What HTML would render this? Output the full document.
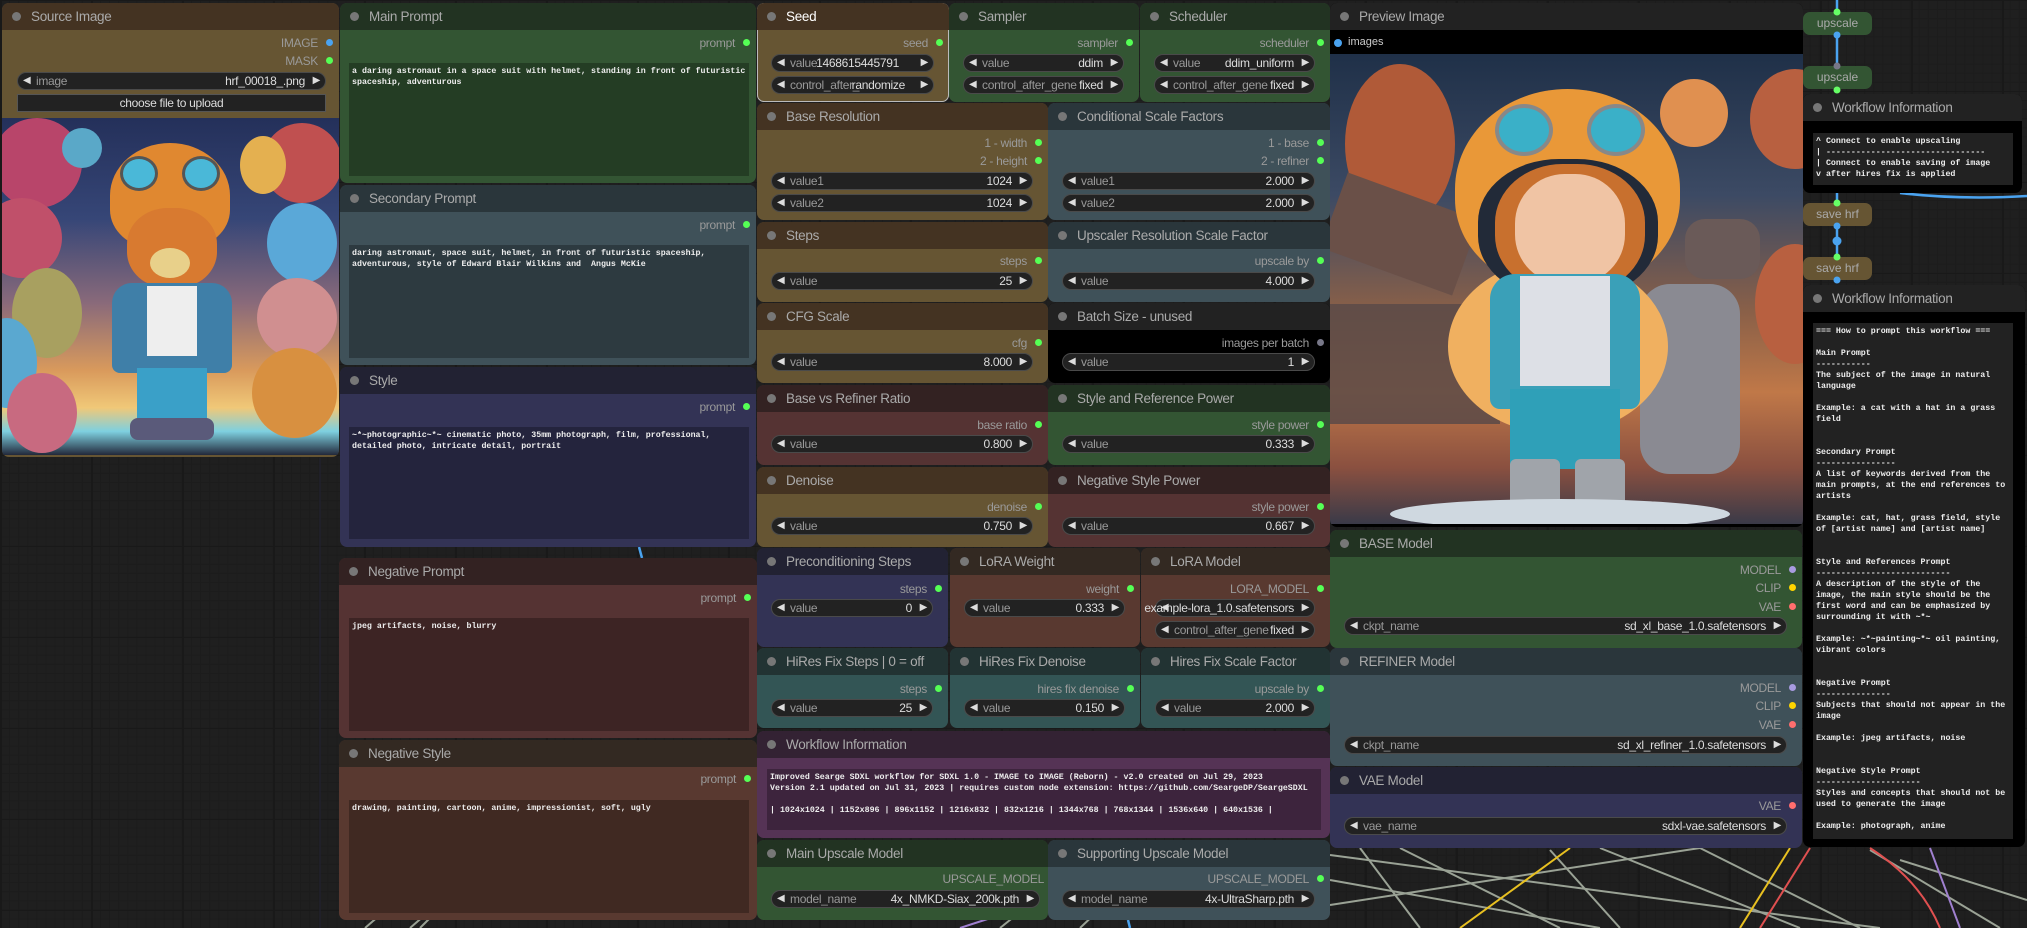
<!DOCTYPE html>
<html><head><meta charset="utf-8">
<style>
*{box-sizing:border-box;margin:0;padding:0}
body{width:2027px;height:928px;overflow:hidden;position:relative;background-color:#1f1f1f;
background-image:linear-gradient(#191919 1px,transparent 1px),linear-gradient(90deg,#191919 2px,transparent 2px),linear-gradient(#1c1c1c 1px,transparent 1px),linear-gradient(90deg,#1c1c1c 1px,transparent 1px);
background-size:91px 91px,91px 91px,9.1px 9.1px,9.1px 9.1px;font-family:"Liberation Sans",Arial,sans-serif}
.n{position:absolute;border-radius:7px;overflow:hidden}
.t{position:absolute;left:0;right:0;top:0;height:27px;line-height:27px;padding-left:29px;font-size:13.5px;color:#aaa;letter-spacing:-.3px;white-space:nowrap}
.t::before{content:"";position:absolute;left:10px;top:9px;width:9px;height:9px;border-radius:50%;background:#777}
.o{position:absolute;right:21px;font-size:12px;color:#9a9a9a;transform:translateY(-50%);letter-spacing:-.3px;white-space:nowrap;line-height:14px}
.o::after{content:"";position:absolute;right:-15px;top:3px;width:7px;height:7px;border-radius:50%;background:var(--c,#5f5)}
.w{position:absolute;left:14px;right:15px;height:18px;border-radius:9px;background:#222;border:1px solid #4a4a4a;font-size:12px;color:#999;line-height:16px;letter-spacing:-.3px;white-space:nowrap}
.w::before{content:"◀";position:absolute;left:5px;top:0;color:#ddd;font-size:10px}
.w::after{content:"▶";position:absolute;right:5px;top:0;color:#ddd;font-size:10px}
.w .l{position:absolute;left:18px}
.w .v{position:absolute;right:20px;color:#ddd}
.ta{position:absolute;background:rgba(0,0,0,.28);font-family:"Liberation Mono",monospace;font-size:8.3px;color:#eee;line-height:11px;padding:3px 3px;white-space:pre-wrap;font-weight:bold;overflow:hidden}
.Y{background:#653}.Y>.t{background:#432}
.G{background:#353}.G>.t{background:#232}
.PB{background:#3f5159}.PB>.t{background:#2a363b}
.B{background:#335}.B>.t{background:#223}
.R{background:#533}.R>.t{background:#322}
.BR{background:#593930}.BR>.t{background:#332922}
.C{background:#355}.C>.t{background:#233}
.P{background:#535}.P>.t{background:#323}
.K{background:#000}.K>.t{background:#222}
.pill{position:absolute;border-radius:7px;font-size:12px;color:#aaa;text-align:center;line-height:23px;width:69px;height:23px}
.bl{position:absolute;border-radius:50%}
</style></head><body>

<svg width="2027" height="928" style="position:absolute;left:0;top:0" fill="none">
<g stroke="#9aa295" stroke-width="2">
<line x1="1000" y1="928" x2="1060" y2="880"/><line x1="1080" y1="928" x2="1120" y2="890"/>
<line x1="1330" y1="880" x2="1600" y2="928"/><line x1="1330" y1="905" x2="1700" y2="848"/>
<line x1="1360" y1="848" x2="1420" y2="928"/><line x1="1400" y1="848" x2="1560" y2="928"/>
<line x1="1550" y1="850" x2="1620" y2="928"/><line x1="1600" y1="848" x2="1800" y2="928"/>
<line x1="1700" y1="848" x2="1860" y2="928"/><line x1="1870" y1="850" x2="2000" y2="928"/>
<line x1="1330" y1="855" x2="1880" y2="928"/><line x1="1900" y1="860" x2="2027" y2="900"/>
<line x1="365" y1="928" x2="380" y2="915"/><line x1="410" y1="928" x2="425" y2="915"/><line x1="420" y1="928" x2="432" y2="916"/>
</g>
<line x1="1460" y1="928" x2="1570" y2="848" stroke="#e8c020" stroke-width="2"/>
<line x1="1740" y1="928" x2="1790" y2="848" stroke="#e8c020" stroke-width="2"/>
<line x1="1760" y1="928" x2="1810" y2="848" stroke="#e05050" stroke-width="2"/>
<path d="M1870 848 Q1920 880 1940 928" stroke="#e05050" stroke-width="2"/>
<line x1="1930" y1="848" x2="1960" y2="928" stroke="#a080d0" stroke-width="2"/>
<line x1="960" y1="928" x2="1000" y2="915" stroke="#a080d0" stroke-width="2"/>
<g stroke="#4aa3f0" stroke-width="2.5">
<line x1="1837" y1="0" x2="1837" y2="12"/><line x1="1837" y1="35" x2="1837" y2="66"/>
<line x1="1837" y1="193" x2="1837" y2="203"/><line x1="1837" y1="226" x2="1837" y2="257"/>
<path d="M1900 193 Q1960 200 2027 196"/>
<line x1="639" y1="547" x2="642" y2="558"/><line x1="1128" y1="920" x2="1130" y2="928"/>
</g>
<line x1="320" y1="458" x2="320" y2="928" stroke="#223" stroke-width="1"/>
</svg>

<!-- Source Image -->
<div class="n Y" style="left:2px;top:3px;width:337px;height:454px">
<div class="t">Source Image</div>
<div class="o" style="top:40px;--c:#4aa3f0">IMAGE</div>
<div class="o" style="top:58px">MASK</div>
<div class="w" style="top:69px;left:15px;right:13px"><span class="l">image</span><span class="v">hrf_00018_.png</span></div>
<div style="position:absolute;left:15px;right:13px;top:91px;height:18px;background:#222;border:1px solid #555;color:#ddd;font-size:12px;text-align:center;line-height:16px;letter-spacing:-.3px">choose file to upload</div>
<div style="position:absolute;left:0;right:0;top:115px;height:337px;overflow:hidden;background:linear-gradient(180deg,#24305a 0%,#364677 30%,#8a6a7a 55%,#d99a5c 75%,#f0c878 86%,#7ed0e0 93%,#22283a 100%)">
 <div class="bl" style="left:-10px;top:0px;width:90px;height:90px;background:#b8456a"></div>
 <div class="bl" style="left:-20px;top:80px;width:80px;height:80px;background:#c0506a"></div>
 <div class="bl" style="left:10px;top:150px;width:70px;height:90px;background:#a8a060"></div>
 <div class="bl" style="left:-25px;top:200px;width:60px;height:90px;background:#5aa8d0"></div>
 <div class="bl" style="left:5px;top:255px;width:70px;height:80px;background:#c86a80"></div>
 <div class="bl" style="left:260px;top:5px;width:80px;height:80px;background:#c05050"></div>
 <div class="bl" style="left:265px;top:85px;width:70px;height:80px;background:#5aa8d8"></div>
 <div class="bl" style="left:255px;top:160px;width:80px;height:80px;background:#d08f90"></div>
 <div class="bl" style="left:250px;top:230px;width:85px;height:90px;background:#d89040"></div>
 <div class="bl" style="left:60px;top:10px;width:40px;height:40px;background:#5aa8c8"></div>
 <div class="bl" style="left:238px;top:18px;width:46px;height:58px;background:#e4b050"></div>
 <div class="bl" style="left:108px;top:25px;width:120px;height:105px;border-radius:55% 55% 40% 40%;background:#e08830"></div>
 <div class="bl" style="left:118px;top:38px;width:38px;height:35px;background:#4ab8d8;border:3px solid #555"></div>
 <div class="bl" style="left:180px;top:38px;width:38px;height:35px;background:#4ab8d8;border:3px solid #555"></div>
 <div class="bl" style="left:125px;top:90px;width:90px;height:80px;border-radius:45%;background:#d87a30"></div>
 <div class="bl" style="left:148px;top:130px;width:40px;height:30px;background:#e8d08a"></div>
 <div style="position:absolute;left:110px;top:165px;width:120px;height:90px;border-radius:20px 20px 8px 8px;background:#3f7fa8"></div>
 <div style="position:absolute;left:145px;top:168px;width:50px;height:70px;background:#eee"></div>
 <div style="position:absolute;left:135px;top:250px;width:70px;height:55px;background:#3aa0c8"></div>
 <div style="position:absolute;left:128px;top:300px;width:84px;height:22px;border-radius:8px;background:#5a5a7a"></div>
</div>
</div>

<!-- column 2 -->
<div class="n G" style="left:340px;top:3px;width:416px;height:180px"><div class="t">Main Prompt</div><div class="o" style="top:40px">prompt</div>
<div class="ta" style="left:9px;top:60px;width:400px;height:113px">a daring astronaut in a space suit with helmet, standing in front of futuristic spaceship, adventurous</div></div>
<div class="n PB" style="left:340px;top:185px;width:416px;height:180px"><div class="t">Secondary Prompt</div><div class="o" style="top:40px">prompt</div>
<div class="ta" style="left:9px;top:60px;width:400px;height:113px">daring astronaut, space suit, helmet, in front of futuristic spaceship, adventurous, style of Edward Blair Wilkins and  Angus McKie</div></div>
<div class="n B" style="left:340px;top:367px;width:416px;height:180px"><div class="t">Style</div><div class="o" style="top:40px">prompt</div>
<div class="ta" style="left:9px;top:60px;width:400px;height:112px">~*~photographic~*~ cinematic photo, 35mm photograph, film, professional, detailed photo, intricate detail, portrait</div></div>
<div class="n R" style="left:339px;top:558px;width:418px;height:180px"><div class="t">Negative Prompt</div><div class="o" style="top:40px">prompt</div>
<div class="ta" style="left:10px;top:60px;width:400px;height:113px">jpeg artifacts, noise, blurry</div></div>
<div class="n BR" style="left:339px;top:740px;width:418px;height:180px"><div class="t">Negative Style</div><div class="o" style="top:39px">prompt</div>
<div class="ta" style="left:10px;top:60px;width:400px;height:113px">drawing, painting, cartoon, anime, impressionist, soft, ugly</div></div>

<!-- column 3 -->
<div class="n Y" style="left:757px;top:3px;width:192px;height:99px;box-shadow:inset 0 0 0 1px #bbb"><div class="t" style="color:#fff">Seed</div><div class="o" style="top:40px">seed</div>
<div class="w" style="top:51px"><span class="l">value</span><span class="v" style="right:34px">1468615445791</span></div>
<div class="w" style="top:73px"><span class="l">control_after_</span><span class="v" style="right:28px">randomize</span></div></div>
<div class="n G" style="left:949px;top:3px;width:190px;height:99px"><div class="t">Sampler</div><div class="o" style="top:40px">sampler</div>
<div class="w" style="top:51px"><span class="l">value</span><span class="v">ddim</span></div>
<div class="w" style="top:73px"><span class="l">control_after_gene</span><span class="v">fixed</span></div></div>
<div class="n G" style="left:1140px;top:3px;width:190px;height:99px"><div class="t">Scheduler</div><div class="o" style="top:40px">scheduler</div>
<div class="w" style="top:51px"><span class="l">value</span><span class="v">ddim_uniform</span></div>
<div class="w" style="top:73px"><span class="l">control_after_gene</span><span class="v">fixed</span></div></div>

<div class="n Y" style="left:757px;top:103px;width:291px;height:117px"><div class="t">Base Resolution</div>
<div class="o" style="top:40px">1 - width</div><div class="o" style="top:58px">2 - height</div>
<div class="w" style="top:69px"><span class="l">value1</span><span class="v">1024</span></div>
<div class="w" style="top:91px"><span class="l">value2</span><span class="v">1024</span></div></div>
<div class="n PB" style="left:1048px;top:103px;width:282px;height:117px"><div class="t">Conditional Scale Factors</div>
<div class="o" style="top:40px">1 - base</div><div class="o" style="top:58px">2 - refiner</div>
<div class="w" style="top:69px"><span class="l">value1</span><span class="v">2.000</span></div>
<div class="w" style="top:91px"><span class="l">value2</span><span class="v">2.000</span></div></div>

<div class="n Y" style="left:757px;top:222px;width:291px;height:80px"><div class="t">Steps</div><div class="o" style="top:39px">steps</div><div class="w" style="top:50px"><span class="l">value</span><span class="v">25</span></div></div>
<div class="n PB" style="left:1048px;top:222px;width:282px;height:80px"><div class="t">Upscaler Resolution Scale Factor</div><div class="o" style="top:39px">upscale by</div><div class="w" style="top:50px"><span class="l">value</span><span class="v">4.000</span></div></div>

<div class="n Y" style="left:757px;top:303px;width:291px;height:80px"><div class="t">CFG Scale</div><div class="o" style="top:40px">cfg</div><div class="w" style="top:50px"><span class="l">value</span><span class="v">8.000</span></div></div>
<div class="n K" style="left:1048px;top:303px;width:282px;height:80px"><div class="t">Batch Size - unused</div><div class="o" style="top:40px;--c:#778">images per batch</div><div class="w" style="top:50px"><span class="l">value</span><span class="v">1</span></div></div>

<div class="n R" style="left:757px;top:385px;width:291px;height:80px"><div class="t">Base vs Refiner Ratio</div><div class="o" style="top:40px">base ratio</div><div class="w" style="top:50px"><span class="l">value</span><span class="v">0.800</span></div></div>
<div class="n G" style="left:1048px;top:385px;width:282px;height:80px"><div class="t">Style and Reference Power</div><div class="o" style="top:40px">style power</div><div class="w" style="top:50px"><span class="l">value</span><span class="v">0.333</span></div></div>

<div class="n Y" style="left:757px;top:467px;width:291px;height:80px"><div class="t">Denoise</div><div class="o" style="top:40px">denoise</div><div class="w" style="top:50px"><span class="l">value</span><span class="v">0.750</span></div></div>
<div class="n R" style="left:1048px;top:467px;width:282px;height:80px"><div class="t">Negative Style Power</div><div class="o" style="top:40px">style power</div><div class="w" style="top:50px"><span class="l">value</span><span class="v">0.667</span></div></div>

<div class="n B" style="left:757px;top:548px;width:191px;height:99px"><div class="t">Preconditioning Steps</div><div class="o" style="top:41px">steps</div><div class="w" style="top:51px"><span class="l">value</span><span class="v">0</span></div></div>
<div class="n BR" style="left:950px;top:548px;width:190px;height:99px"><div class="t">LoRA Weight</div><div class="o" style="top:41px">weight</div><div class="w" style="top:51px"><span class="l">value</span><span class="v">0.333</span></div></div>
<div class="n BR" style="left:1141px;top:548px;width:189px;height:99px"><div class="t">LoRA Model</div><div class="o" style="top:41px">LORA_MODEL</div>
<div class="w" style="top:51px"><span class="v">example-lora_1.0.safetensors</span></div>
<div class="w" style="top:73px"><span class="l">control_after_gene</span><span class="v">fixed</span></div></div>

<div class="n C" style="left:757px;top:648px;width:191px;height:80px"><div class="t">HiRes Fix Steps | 0 = off</div><div class="o" style="top:41px">steps</div><div class="w" style="top:51px"><span class="l">value</span><span class="v">25</span></div></div>
<div class="n C" style="left:950px;top:648px;width:190px;height:80px"><div class="t">HiRes Fix Denoise</div><div class="o" style="top:41px">hires fix denoise</div><div class="w" style="top:51px"><span class="l">value</span><span class="v">0.150</span></div></div>
<div class="n C" style="left:1141px;top:648px;width:189px;height:80px"><div class="t">Hires Fix Scale Factor</div><div class="o" style="top:41px">upscale by</div><div class="w" style="top:51px"><span class="l">value</span><span class="v">2.000</span></div></div>

<div class="n P" style="left:757px;top:731px;width:573px;height:107px"><div class="t">Workflow Information</div>
<div class="ta" style="left:10px;top:38px;width:554px;height:61px">Improved Searge SDXL workflow for SDXL 1.0 - IMAGE to IMAGE (Reborn) - v2.0 created on Jul 29, 2023
Version 2.1 updated on Jul 31, 2023 | requires custom node extension: https://github.com/SeargeDP/SeargeSDXL

| 1024x1024 | 1152x896 | 896x1152 | 1216x832 | 832x1216 | 1344x768 | 768x1344 | 1536x640 | 640x1536 |</div></div>

<div class="n G" style="left:757px;top:840px;width:291px;height:80px"><div class="t">Main Upscale Model</div><div class="o" style="top:39px;right:4px">UPSCALE_MODEL</div>
<div class="w" style="top:50px;right:8px"><span class="l">model_name</span><span class="v">4x_NMKD-Siax_200k.pth</span></div></div>
<div class="n PB" style="left:1048px;top:840px;width:282px;height:80px"><div class="t">Supporting Upscale Model</div><div class="o" style="top:39px">UPSCALE_MODEL</div>
<div class="w" style="top:50px"><span class="l">model_name</span><span class="v">4x-UltraSharp.pth</span></div></div>

<!-- Preview -->
<div class="n" style="left:1330px;top:3px;width:473px;height:524px;background:#000"><div class="t" style="background:#222">Preview Image</div>
<div style="position:absolute;left:4px;top:36px;width:8px;height:8px;border-radius:50%;background:#4aa3f0"></div>
<div style="position:absolute;left:18px;top:33px;font-size:11px;color:#ccc">images</div>
<div style="position:absolute;left:0;top:51px;width:473px;height:470px;overflow:hidden;background:linear-gradient(180deg,#1f3048 0%,#3c4a64 30%,#8a6048 55%,#c07848 72%,#8a5040 88%,#3a3a48 100%)">
 <div class="bl" style="left:15px;top:10px;width:110px;height:160px;background:#b05a38"></div>
 <div class="bl" style="left:330px;top:25px;width:68px;height:68px;background:#e09050"></div>
 <div class="bl" style="left:420px;top:15px;width:90px;height:100px;background:#b86040"></div>
 <div class="bl" style="left:425px;top:190px;width:80px;height:120px;background:#b86040"></div>
 <div style="position:absolute;left:0;top:140px;width:140px;height:80px;background:#6a5048;transform:rotate(20deg)"></div>
 <div style="position:absolute;left:0;top:250px;width:170px;height:120px;background:#5a4a48;opacity:.85"></div>
 <div style="position:absolute;left:355px;top:165px;width:75px;height:60px;border-radius:20px;background:#6a5a58"></div>
 <div style="position:absolute;left:310px;top:230px;width:100px;height:190px;border-radius:30px;background:#8a8a92"></div>
 <div class="bl" style="left:118px;top:205px;width:220px;height:175px;background:#f0b060"></div>
 <div class="bl" style="left:125px;top:35px;width:225px;height:200px;border-radius:50% 50% 45% 45%;background:#e99838"></div>
 <div class="bl" style="left:165px;top:50px;width:58px;height:52px;background:#3ab0c8;border:4px solid #888"></div>
 <div class="bl" style="left:257px;top:50px;width:58px;height:52px;background:#3ab0c8;border:4px solid #888"></div>
 <div class="bl" style="left:148px;top:105px;width:180px;height:140px;border-radius:45%;background:#222a38"></div>
 <div class="bl" style="left:165px;top:110px;width:150px;height:130px;border-radius:45%;background:#c8702e"></div>
 <div class="bl" style="left:185px;top:120px;width:110px;height:110px;border-radius:45%;background:#f0c4a4"></div>
 <div style="position:absolute;left:160px;top:220px;width:150px;height:135px;border-radius:25px 25px 10px 10px;background:#3aa0b8"></div>
 <div style="position:absolute;left:190px;top:222px;width:90px;height:110px;background:#dde0e6"></div>
 <div style="position:absolute;left:180px;top:335px;width:110px;height:80px;background:#2fa0b8"></div>
 <div style="position:absolute;left:180px;top:405px;width:50px;height:55px;background:#a0a4aa;border-radius:6px"></div>
 <div style="position:absolute;left:245px;top:405px;width:50px;height:55px;background:#a0a4aa;border-radius:6px"></div>
 <div class="bl" style="left:60px;top:445px;width:340px;height:30px;background:#cfd8e0"></div>
</div></div>

<div class="n G" style="left:1330px;top:530px;width:472px;height:118px"><div class="t">BASE Model</div>
<div class="o" style="top:40px;--c:#a89be0">MODEL</div><div class="o" style="top:58px;--c:#ffd500">CLIP</div><div class="o" style="top:77px;--c:#ff6e6e">VAE</div>
<div class="w" style="top:87px"><span class="l">ckpt_name</span><span class="v">sd_xl_base_1.0.safetensors</span></div></div>
<div class="n PB" style="left:1330px;top:648px;width:472px;height:118px"><div class="t">REFINER Model</div>
<div class="o" style="top:40px;--c:#a89be0">MODEL</div><div class="o" style="top:58px;--c:#ffd500">CLIP</div><div class="o" style="top:77px;--c:#ff6e6e">VAE</div>
<div class="w" style="top:88px"><span class="l">ckpt_name</span><span class="v">sd_xl_refiner_1.0.safetensors</span></div></div>
<div class="n B" style="left:1330px;top:767px;width:472px;height:81px"><div class="t">VAE Model</div>
<div class="o" style="top:39px;--c:#ff6e6e">VAE</div>
<div class="w" style="top:50px"><span class="l">vae_name</span><span class="v">sdxl-vae.safetensors</span></div></div>

<!-- right column -->
<div class="pill" style="left:1803px;top:12px;background:#353">upscale</div>
<div class="pill" style="left:1803px;top:66px;background:#353">upscale</div>
<div class="pill" style="left:1803px;top:203px;background:#653">save hrf</div>
<div class="pill" style="left:1803px;top:257px;background:#653">save hrf</div>
<svg width="2027" height="300" style="position:absolute;left:0;top:0">
<circle cx="1837" cy="12" r="3.5" fill="#6f6"/><circle cx="1837" cy="35" r="3.5" fill="#4aa3f0"/>
<circle cx="1837" cy="66" r="3.5" fill="#778"/><circle cx="1837" cy="90" r="3.5" fill="#6f6"/>
<circle cx="1837" cy="203" r="3.5" fill="#6f6"/><circle cx="1837" cy="226" r="3.5" fill="#4aa3f0"/>
<circle cx="1837" cy="241" r="4.5" fill="#4aa3f0"/>
<circle cx="1837" cy="257" r="3.5" fill="#6f6"/><circle cx="1837" cy="280" r="3.5" fill="#4aa3f0"/>
</svg>
<div class="n K" style="left:1803px;top:94px;width:219px;height:99px"><div class="t">Workflow Information</div>
<div class="ta" style="left:10px;top:39px;width:200px;height:52px;background:#222">^ Connect to enable upscaling
| --------------------------------
| Connect to enable saving of image
v after hires fix is applied</div></div>
<div class="n K" style="left:1803px;top:285px;width:222px;height:562px"><div class="t">Workflow Information</div>
<div class="ta" style="left:10px;top:38px;width:200px;height:516px;background:#222">=== How to prompt this workflow ===

Main Prompt
-----------
The subject of the image in natural language

Example: a cat with a hat in a grass field


Secondary Prompt
----------------
A list of keywords derived from the main prompts, at the end references to artists

Example: cat, hat, grass field, style of [artist name] and [artist name]


Style and References Prompt
---------------------------
A description of the style of the image, the main style should be the first word and can be emphasized by surrounding it with ~*~

Example: ~*~painting~*~ oil painting, vibrant colors


Negative Prompt
---------------
Subjects that should not appear in the image

Example: jpeg artifacts, noise


Negative Style Prompt
---------------------
Styles and concepts that should not be used to generate the image

Example: photograph, anime</div></div>
</body></html>
